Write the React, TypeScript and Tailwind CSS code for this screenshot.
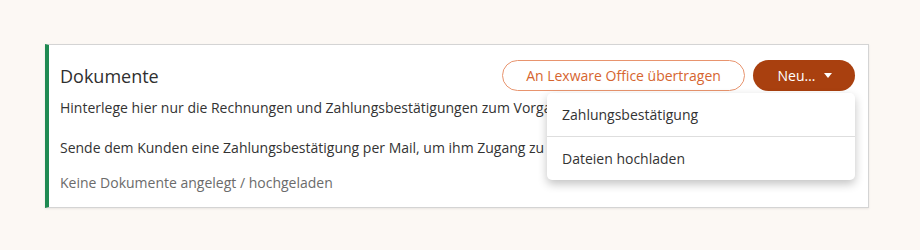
import React from "react";

export default function App() {
  return (
    <div
      className="h-[250px] w-[920px] bg-[#fcf8f4] pt-[44px] pl-[45px] pr-[51px]"
      style={{ fontFamily: '"Open Sans", "Noto Sans", sans-serif' }}
    >
      <div className="relative h-[164px] bg-white border border-[#d4d4d4] border-l-[4px] border-l-[#1f8a52] pl-[11px] pr-[13px] pt-[15px] shadow-[0_1px_2px_rgba(0,0,0,0.08)]">
        <div className="flex items-center justify-between h-[31px]">
          <h2 className="text-[18px] text-[#2f2f2f] leading-none">Dokumente</h2>
          <div className="relative flex items-center gap-[8px]">
            <button className="h-[31px] w-[243px] rounded-full border border-[#e8946e] text-[14px] text-[#d6652f] bg-white">
              An Lexware Office übertragen
            </button>
            <button className="h-[31px] w-[102px] rounded-full bg-[#a9400f] text-[14px] text-white flex items-center justify-center gap-[9px] pl-[2px]">
              <span>Neu…</span>
              <svg width="8" height="5" viewBox="0 0 8 5">
                <path d="M0 0 L8 0 L4 5 Z" fill="white" />
              </svg>
            </button>
            <div className="absolute right-0 top-[33px] w-[308px] bg-white rounded-[5px] shadow-[0_4px_10px_rgba(0,0,0,0.24)] z-10">
              <div className="h-[43px] flex items-center px-[15px] text-[14px] text-[#333]">Zahlungsbestätigung</div>
              <div className="h-px bg-[#dedede]" />
              <div className="h-[43px] flex items-center px-[15px] text-[14px] text-[#333]">Dateien hochladen</div>
            </div>
          </div>
        </div>
        <p className="mt-[7px] text-[14px] leading-[20px] text-[#333] whitespace-nowrap overflow-hidden">
          Hinterlege hier nur die Rechnungen und Zahlungsbestätigungen zum Vorgang, die der Kunde sehen soll.
        </p>
        <p className="mt-[20px] text-[14px] leading-[20px] text-[#333] whitespace-nowrap overflow-hidden">
          Sende dem Kunden eine Zahlungsbestätigung per Mail, um ihm Zugang zu den Dokumenten zu geben.
        </p>
        <p className="mt-[15px] text-[14px] leading-[20px] text-[#6b6b6b] whitespace-nowrap">
          Keine Dokumente angelegt / hochgeladen
        </p>
      </div>
    </div>
  );
}
